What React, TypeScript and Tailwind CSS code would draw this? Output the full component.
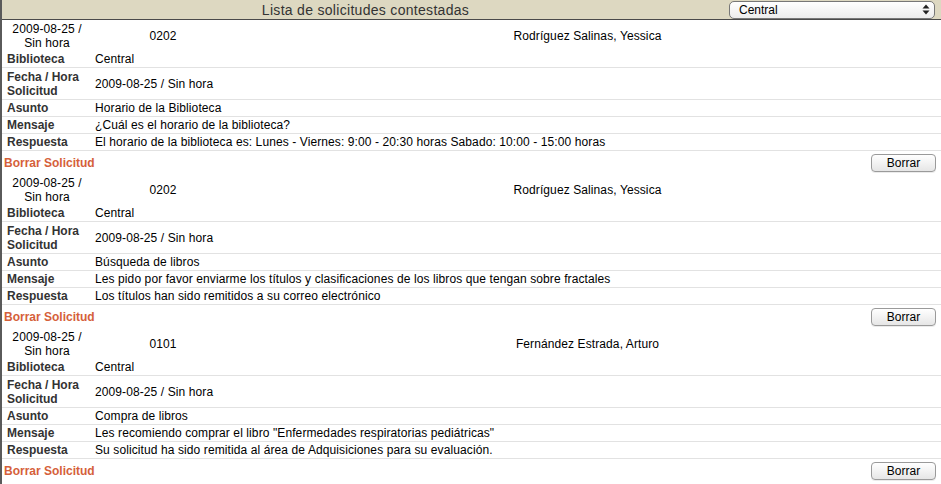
const solicitudes = [
  {
    codigo: "0202",
    nombre: "Rodríguez Salinas, Yessica",
    asunto: "Horario de la Biblioteca",
    mensaje: "¿Cuál es el horario de la biblioteca?",
    respuesta:
      "El horario de la biblioteca es: Lunes - Viernes: 9:00 - 20:30 horas Sabado: 10:00 - 15:00 horas",
  },
  {
    codigo: "0202",
    nombre: "Rodríguez Salinas, Yessica",
    asunto: "Búsqueda de libros",
    mensaje:
      "Les pido por favor enviarme los títulos y clasificaciones de los libros que tengan sobre fractales",
    respuesta: "Los títulos han sido remitidos a su correo electrónico",
  },
  {
    codigo: "0101",
    nombre: "Fernández Estrada, Arturo",
    asunto: "Compra de libros",
    mensaje: 'Les recomiendo comprar el libro "Enfermedades respiratorias pediátricas"',
    respuesta: "Su solicitud ha sido remitida al área de Adquisiciones para su evaluación.",
  },
];

function Row({ label, children, tall }: { label: React.ReactNode; children: React.ReactNode; tall?: boolean }) {
  return (
    <div className={`flex items-center border-b border-[#e2e2e2] ${tall ? "h-[32px]" : "h-[17px]"}`}>
      <div className="w-[93px] shrink-0 pl-[5px] font-bold text-[#333] leading-[14px]">{label}</div>
      <div className="leading-[14px] tracking-[0.1px] text-black">{children}</div>
    </div>
  );
}

function Solicitud({ s }: { s: (typeof solicitudes)[number] }) {
  return (
    <div className="flex flex-col">
      <div className="grid h-[31px] grid-cols-[90px_142px_1fr] items-center text-center leading-[14px] tracking-[0.1px] text-black">
        <div>
          2009-08-25 /
          <br />
          Sin hora
        </div>
        <div className="pt-[1px]">{s.codigo}</div>
        <div className="pt-[1px]">{s.nombre}</div>
      </div>
      <Row label="Biblioteca">Central</Row>
      <Row label={<>Fecha / Hora<br />Solicitud</>} tall>
        2009-08-25 / Sin hora
      </Row>
      <Row label="Asunto">{s.asunto}</Row>
      <Row label="Mensaje">{s.mensaje}</Row>
      <Row label="Respuesta">{s.respuesta}</Row>
      <div className="flex h-[23px] items-center justify-between pl-[2px] pr-[5px]">
        <span className="font-bold text-[#d5603a]">Borrar Solicitud</span>
        <button className="h-[18px] w-[65px] rounded-[4px] border border-[#9a9a9a] bg-gradient-to-b from-white to-[#e6e6e6] text-[12px] leading-[16px] text-black shadow-[0_1px_0_rgba(0,0,0,0.08)]">
          Borrar
        </button>
      </div>
    </div>
  );
}

export default function App() {
  return (
    <div
      className="h-[484px] w-[941px] overflow-hidden border-l-2 border-[#5a5a5a] bg-white text-[12px]"
      style={{ fontFamily: '"Liberation Sans", Arial, sans-serif' }}
    >
      <div className="flex h-[20px] items-center border-b border-[#4a4a4a] bg-[#ddd8c1]">
        <div className="w-[727px] text-center text-[14px] leading-[18px] tracking-[0.3px] text-[#333]">
          Lista de solicitudes contestadas
        </div>
        <div className="flex h-[18px] w-[206px] items-center justify-between rounded-[5px] border border-[#777] bg-gradient-to-b from-white to-[#ececec] pl-[9px] pr-[4px]">
          <span className="text-[12px] leading-[14px] text-black">Central</span>
          <svg width="8" height="11" viewBox="0 0 8 11" className="fill-[#222]">
            <path d="M4 0.5 L7.5 4.5 H0.5 Z" />
            <path d="M4 10.5 L7.5 6.5 H0.5 Z" />
          </svg>
        </div>
      </div>
      {solicitudes.map((s, i) => (
        <Solicitud key={i} s={s} />
      ))}
    </div>
  );
}
